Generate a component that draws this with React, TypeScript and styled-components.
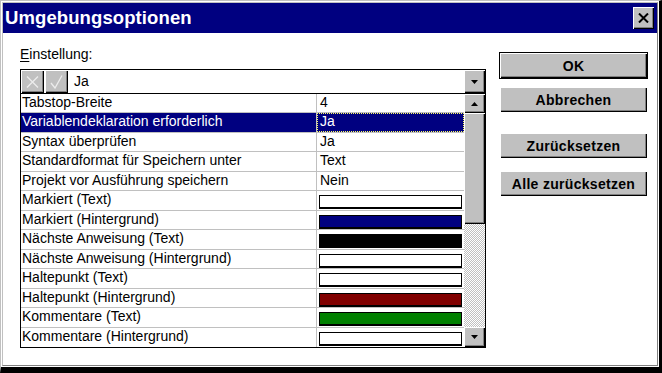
import React from "react";
import styled, { createGlobalStyle, css } from "styled-components";

const GlobalStyle = createGlobalStyle`
  html, body { margin: 0; padding: 0; background: #fff; }
  body { font-family: "Liberation Sans", Arial, sans-serif; color: #000; }
  * { box-sizing: border-box; }
`;

const Window = styled.div`
  width: 662px;
  height: 373px;
  display: flex;
  border-style: solid;
  border-width: 1px 3px 6px 1px;
  border-color: #c0c0c0 #000 #000 #c0c0c0;
`;

const Frame = styled.div`
  flex: 1;
  display: flex;
  border: 1px solid #fff;
`;

const Inner = styled.div`
  flex: 1;
  display: flex;
  flex-direction: column;
  border: 1px solid;
  border-color: #c0c0c0 #808080 #808080 #c0c0c0;
  background: #fff;
`;

const TitleBar = styled.div`
  height: 30px;
  flex: none;
  background: #000080;
  display: flex;
  align-items: center;
  justify-content: space-between;
  padding: 0 3px 0 2px;
`;

const Title = styled.h1`
  margin: 0;
  color: #fff;
  font-size: 18.5px;
  font-weight: bold;
  line-height: 22px;
  letter-spacing: 0.1px;
`;

const Bevel = css`
  background: #c0c0c0;
  border: none;
  padding: 0;
  box-shadow: inset 1px 1px #fff, inset -1px -1px #000, inset -2px -2px #808080;
`;

const CloseButton = styled.div`
  ${Bevel};
  width: 21px;
  height: 22px;
  display: flex;
  align-items: center;
  justify-content: center;
`;

const Body = styled.div`
  flex: 1;
  display: flex;
  padding-left: 17px;
`;

const LeftColumn = styled.div`
  width: 466px;
  padding-top: 13px;
  display: flex;
  flex-direction: column;
`;

const Label = styled.label`
  height: 23px;
  font-size: 14px;
  line-height: 16px;
  u { text-decoration: underline; text-underline-offset: 2px; }
`;

const Combo = styled.div`
  height: 24px;
  display: flex;
  border: 1px solid #000;
  border-bottom: none;
`;

const EditButton = styled.div`
  ${Bevel};
  width: 23px;
  height: 23px;
  margin-right: 1px;
  display: flex;
  align-items: center;
  justify-content: center;
`;

const ComboText = styled.div`
  flex: 1;
  font-size: 14px;
  line-height: 23px;
  padding-left: 5px;
`;

const ArrowButton = styled.div<{ $h: number }>`
  ${Bevel};
  width: 21px;
  height: ${(p) => p.$h}px;
  flex: none;
  display: flex;
  align-items: center;
  justify-content: center;
`;

const Grid = styled.div`
  height: 255px;
  display: flex;
  border: 1px solid #000;
`;

const Rows = styled.div`
  flex: 1;
  display: flex;
  flex-direction: column;
`;

const Row = styled.div<{ $h: number; $selected?: boolean }>`
  height: ${(p) => p.$h}px;
  display: flex;
  border-bottom: 1px solid #c0c0c0;
  font-size: 14px;
  line-height: 17px;
  background: ${(p) => (p.$selected ? "#000080" : "#fff")};
  color: ${(p) => (p.$selected ? "#fff" : "#000")};
  &:last-child { border-bottom: none; }
`;

const NameCell = styled.div<{ $thick?: boolean }>`
  width: 296px;
  flex: none;
  padding-left: 1px;
  border-right: 1px solid #c0c0c0;
  white-space: nowrap;
  ${(p) => p.$thick && css`box-shadow: 0 1px #c0c0c0;`}
`;

const ValueCell = styled.div<{ $focus?: boolean }>`
  flex: 1;
  padding-left: 3px;
  white-space: nowrap;
  ${(p) => p.$focus && css`outline: 1px dotted #ffff60; outline-offset: -1px;`}
`;

const Swatch = styled.div<{ $color: string }>`
  height: 14px;
  margin: 4px 2px 0 -1px;
  background: ${(p) => p.$color};
  border: 1px solid #000;
  border-bottom-width: 2px;
`;

const ScrollBar = styled.div`
  width: 21px;
  flex: none;
  display: flex;
  flex-direction: column;
`;

const Thumb = styled.div`
  ${Bevel};
  height: 111px;
  flex: none;
`;

const Track = styled.div`
  flex: 1;
  background: repeating-conic-gradient(#c0c0c0 0 25%, #fff 0 50%) 0 0 / 2px 2px;
`;

const RightColumn = styled.div`
  width: 149px;
  margin-left: 13px;
  padding-top: 19px;
  display: flex;
  flex-direction: column;
  align-items: center;
`;

const DialogButton = styled.button<{ $default?: boolean; $gap: number }>`
  ${Bevel};
  width: ${(p) => (p.$default ? 149 : 147)}px;
  height: ${(p) => (p.$default ? 27 : 25)}px;
  margin-top: ${(p) => p.$gap}px;
  font-family: "Liberation Sans", Arial, sans-serif;
  font-size: 14px;
  font-weight: bold;
  letter-spacing: 0.3px;
  color: #000;
  ${(p) =>
    p.$default &&
    css`
      box-shadow: inset 0 0 0 1px #000, inset 2px 2px #fff, inset -2px -2px #000, inset -3px -3px #808080;
    `}
`;

const Arrow = ({ down }: { down?: boolean }) => (
  <svg width="7" height="4" viewBox="0 0 7 4">
    <polygon points={down ? "0,0 7,0 3.5,4" : "0,4 7,4 3.5,0"} fill="#000" />
  </svg>
);

type Item = { name: string; value?: string; color?: string };

const items: Item[] = [
  { name: "Tabstop-Breite", value: "4" },
  { name: "Variablendeklaration erforderlich", value: "Ja" },
  { name: "Syntax überprüfen", value: "Ja" },
  { name: "Standardformat für Speichern unter", value: "Text" },
  { name: "Projekt vor Ausführung speichern", value: "Nein" },
  { name: "Markiert (Text)", color: "#fff" },
  { name: "Markiert (Hintergrund)", color: "#000080" },
  { name: "Nächste Anweisung (Text)", color: "#000" },
  { name: "Nächste Anweisung (Hintergrund)", color: "#fff" },
  { name: "Haltepunkt (Text)", color: "#fff" },
  { name: "Haltepunkt (Hintergrund)", color: "#800000" },
  { name: "Kommentare (Text)", color: "#008000" },
  { name: "Kommentare (Hintergrund)", color: "#fff" },
];

export default function App() {
  return (
    <>
      <GlobalStyle />
      <Window>
        <Frame>
          <Inner>
            <TitleBar>
              <Title>Umgebungsoptionen</Title>
              <CloseButton>
                <svg width="11" height="10" viewBox="0 0 11 10">
                  <path d="M1 0.5 L10 9.5 M10 0.5 L1 9.5" stroke="#000" strokeWidth="2" />
                </svg>
              </CloseButton>
            </TitleBar>
            <Body>
              <LeftColumn>
                <Label>
                  <u>E</u>instellung:
                </Label>
                <Combo>
                  <EditButton>
                    <svg width="13" height="12" viewBox="0 0 13 12">
                      <path d="M1 0.5 L12 11.5 M12 0.5 L1 11.5" stroke="#ececec" strokeWidth="1.3" />
                    </svg>
                  </EditButton>
                  <EditButton>
                    <svg width="13" height="14" viewBox="0 0 13 14">
                      <path d="M1 8 L5 13 L12 0.5" stroke="#ececec" strokeWidth="1.3" fill="none" />
                    </svg>
                  </EditButton>
                  <ComboText>Ja</ComboText>
                  <ArrowButton $h={23}>
                    <Arrow down />
                  </ArrowButton>
                </Combo>
                <Grid>
                  <Rows>
                    {items.map((it, i) => (
                      <Row key={it.name} $h={i % 2 === 0 ? 19 : 20} $selected={i === 1}>
                        <NameCell $thick={i === 9}>{it.name}</NameCell>
                        <ValueCell $focus={i === 1}>
                          {it.color ? <Swatch $color={it.color} /> : it.value}
                        </ValueCell>
                      </Row>
                    ))}
                  </Rows>
                  <ScrollBar>
                    <ArrowButton $h={19}>
                      <Arrow />
                    </ArrowButton>
                    <Thumb />
                    <Track />
                    <ArrowButton $h={20}>
                      <Arrow down />
                    </ArrowButton>
                  </ScrollBar>
                </Grid>
              </LeftColumn>
              <RightColumn>
                <DialogButton $default $gap={0}>OK</DialogButton>
                <DialogButton $gap={8}>Abbrechen</DialogButton>
                <DialogButton $gap={21}>Zurücksetzen</DialogButton>
                <DialogButton $gap={13}>Alle zurücksetzen</DialogButton>
              </RightColumn>
            </Body>
          </Inner>
        </Frame>
      </Window>
    </>
  );
}
